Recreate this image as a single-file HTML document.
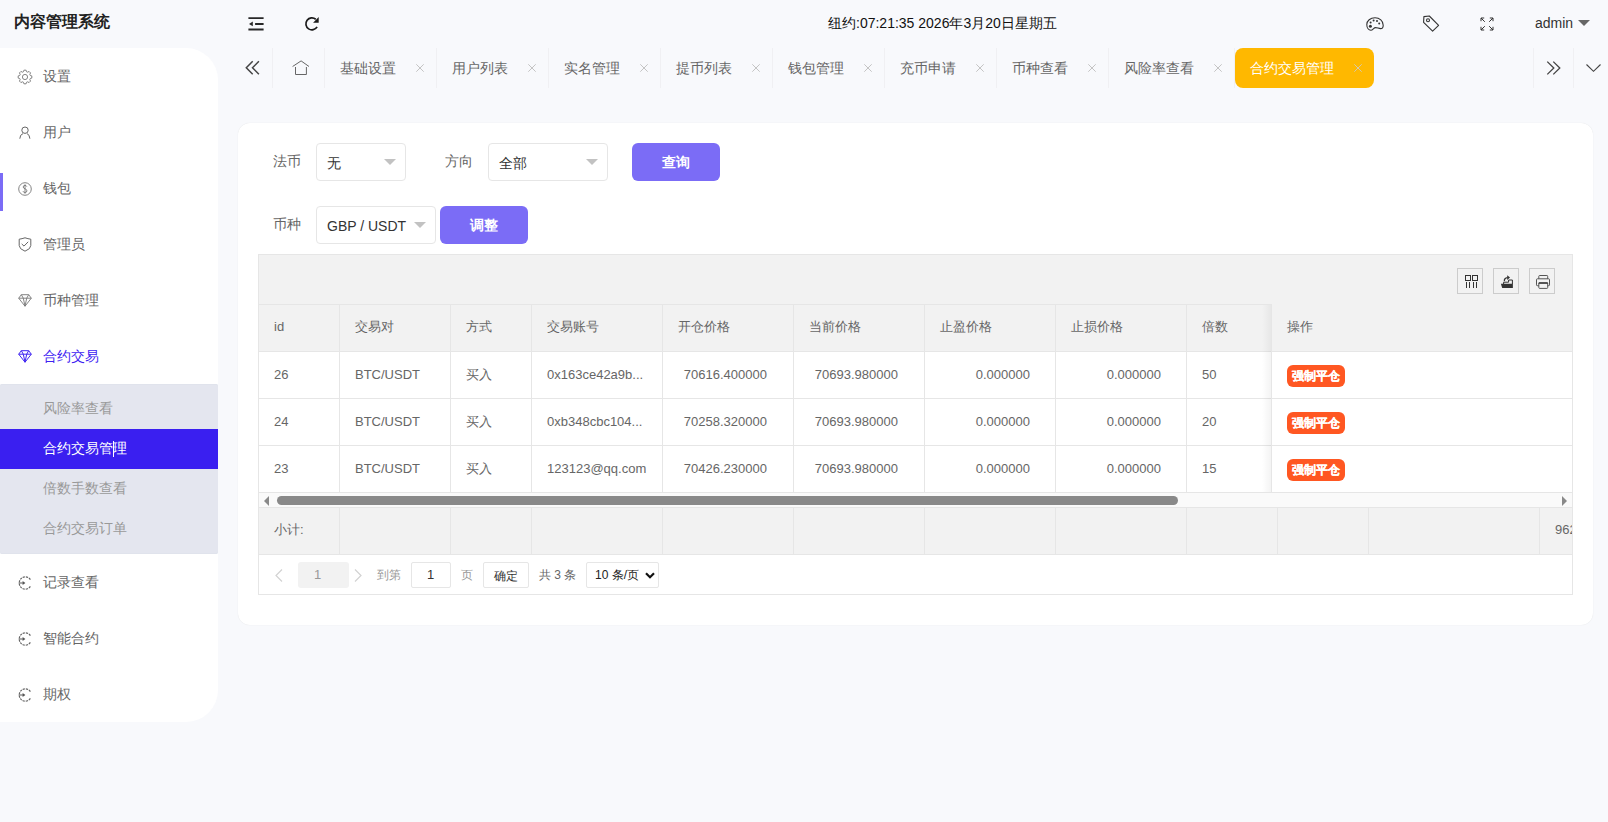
<!DOCTYPE html>
<html><head><meta charset="utf-8">
<style>
*{margin:0;padding:0;box-sizing:border-box}
html,body{width:1608px;height:822px;overflow:hidden;background:#f8f9fc;font-family:"Liberation Sans",sans-serif;font-size:14px;color:#333}
.a{position:absolute}
.t{position:absolute;white-space:nowrap;line-height:1}
svg{position:absolute;overflow:visible}
/* sidebar */
#side{position:absolute;left:0;top:48px;width:218px;height:674px;background:#fff;border-radius:0 32px 32px 0}
.mi{position:absolute;left:43px;font-size:14px;color:#666;line-height:20px}
.sub{position:absolute;left:0;top:384px;width:218px;height:170px;background:#e4e6ef;border-radius:2px;box-shadow:inset 0 1px 0 #e0e3ec,inset 0 -1px 0 #e0e3ec}
.si{position:absolute;left:43px;font-size:14px;color:#999;line-height:20px}
/* tabs */
.tab{position:absolute;top:48px;height:40px;line-height:40px;color:#666;font-size:14px}
.sep{position:absolute;top:48px;width:1px;height:40px;background:#f0f0f3}
.x{position:absolute;width:8px;height:8px}
/* card */
#card{position:absolute;left:238px;top:123px;width:1355px;height:502px;background:#fff;border-radius:12px;box-shadow:0 0 1px rgba(0,0,0,.12)}
.lbl{position:absolute;color:#666;font-size:14px;line-height:20px}
.sel{position:absolute;border:1px solid #e6e6e6;border-radius:4px;background:#fff;height:38px}
.sel span{position:absolute;left:10px;top:9px;line-height:20px;color:#333;font-size:14px}
.tri{position:absolute;width:0;height:0;border-left:6px solid transparent;border-right:6px solid transparent;border-top:6px solid #c2c2c2}
.btn{position:absolute;background:#7b6cf6;color:#fff;border-radius:6px;height:38px;line-height:38px;text-align:center;font-weight:bold;font-size:14px}
/* table */
.tb{position:absolute;font-size:13px;color:#666}
.vl{position:absolute;width:1px;background:#e6e6e6}
.hl{position:absolute;height:1px;background:#e6e6e6}
.c{position:absolute;line-height:20px;white-space:nowrap}
.r{position:absolute;line-height:20px;white-space:nowrap;text-align:right}
.badge{position:absolute;width:58px;height:22px;line-height:22px;background:#ff5722;color:#fff;font-size:12px;font-weight:bold;text-align:center;border-radius:6px;-webkit-text-stroke:0.2px #fff}
.tool{position:absolute;top:268px;width:26px;height:26px;border:1px solid #ccc}
</style></head><body>

<!-- header -->
<div class="t" style="left:14px;top:14px;font-size:16px;font-weight:bold;color:#222">内容管理系统</div>
<svg style="left:248px;top:17px" width="16" height="14" viewBox="0 0 16 14"><path d="M0.4 1.1H15.6M7.1 6.95H15.6M0.4 12.5H15.6" stroke="#282828" stroke-width="1.9" fill="none"/><path d="M1 6.95L4.8 4.6V9.3Z" fill="#282828"/></svg>
<svg style="left:300px;top:12px" width="24" height="24" viewBox="0 0 24 24"><path d="M17.1 14.85A6 6 0 1 1 15.76 7.25" stroke="#1a1a1a" stroke-width="1.7" fill="none"/><path d="M18.7 5.1V10.8H13.1Z" fill="#1a1a1a"/></svg>
<div class="t" style="left:828px;top:16px;font-size:14px;color:#111">纽约:07:21:35 2026年3月20日星期五</div>
<!-- palette -->
<svg style="left:1366px;top:17px" width="18" height="14" viewBox="0 0 18 14">
  <path d="M9 0.8C4.3 0.8 0.8 3.8 0.8 7.6C0.8 11.2 2.8 13.2 4.8 13.2C7 13.2 7.6 10.6 9.6 10.6C11.4 10.6 12.6 11.6 14.6 11.6C16.6 11.6 17.2 10.2 17.2 8.2C17.2 4 13.6 0.8 9 0.8Z" stroke="#333" stroke-width="1.1" fill="none"/>
  <circle cx="4.4" cy="9.3" r="1.5" fill="#333"/><circle cx="4.6" cy="5.4" r="1" fill="#333"/><circle cx="7.6" cy="3.5" r="1" fill="#333"/><circle cx="11" cy="4" r="1" fill="#333"/><circle cx="13.2" cy="6.6" r="1" fill="#333"/>
</svg>
<!-- tag -->
<svg style="left:1423px;top:15px" width="17" height="17" viewBox="0 0 17 17">
  <path d="M0.9 1.6L6.3 1L15.6 10.3L9.6 16.2L0.6 7.3Z" stroke="#333" stroke-width="1.1" fill="none" stroke-linejoin="round"/>
  <circle cx="5" cy="5.3" r="1.5" stroke="#333" stroke-width="1.1" fill="none"/>
</svg>
<!-- fullscreen -->
<svg style="left:1480px;top:17px" width="14" height="14" viewBox="0 0 14 14">
  <path d="M1 4.2V1H4.2M1 1L4.8 4.8M9.8 1H13V4.2M13 1L9.2 4.8M1 9.8V13H4.2M1 13L4.8 9.2M9.8 13H13V9.8M13 13L9.2 9.2" stroke="#333" stroke-width="1" fill="none"/>
</svg>
<div class="t" style="left:1535px;top:16px;font-size:14px;color:#333">admin</div>
<div class="tri" style="left:1578px;top:20px;border-top-color:#666"></div>

<!-- sidebar -->
<div id="side"></div>
<div class="sub"></div>
<div class="a" style="left:0;top:429px;width:218px;height:40px;background:#3a1ff0"></div>
<div class="a" style="left:0;top:173px;width:3px;height:38px;background:#7b6cf6"></div>


<!-- sidebar icons -->
<svg style="left:18px;top:69.5px" width="14" height="14" viewBox="0 0 14 14"><path d="M5.48 1.71 L5.92 0.18 L8.08 0.18 L8.52 1.71 L9.67 2.19 L11.06 1.42 L12.58 2.94 L11.81 4.33 L12.29 5.48 L13.82 5.92 L13.82 8.08 L12.29 8.52 L11.81 9.67 L12.58 11.06 L11.06 12.58 L9.67 11.81 L8.52 12.29 L8.08 13.82 L5.92 13.82 L5.48 12.29 L4.33 11.81 L2.94 12.58 L1.42 11.06 L2.19 9.67 L1.71 8.52 L0.18 8.08 L0.18 5.92 L1.71 5.48 L2.19 4.33 L1.42 2.94 L2.94 1.42 L4.33 2.19Z" stroke="#777" stroke-width="0.9" fill="none" stroke-linejoin="round"/><circle cx="7" cy="7" r="2.6" stroke="#777" stroke-width="0.9" fill="none"/></svg>
<svg style="left:18px;top:126px" width="14" height="14" viewBox="0 0 14 14"><circle cx="7" cy="4.2" r="3.2" stroke="#666" stroke-width="1" fill="none"/><path d="M1.8 12.7Q2 8.5 5 7.6M9 7.6Q11.6 8.5 11.9 12.7" stroke="#666" stroke-width="1" fill="none"/></svg>
<svg style="left:18px;top:182px" width="14" height="14" viewBox="0 0 14 14"><circle cx="7" cy="7" r="6.3" stroke="#777" stroke-width="0.9" fill="none"/><path d="M8.8 4.6Q8.3 3.4 7 3.4Q5.2 3.4 5.2 5Q5.2 6.2 7 6.8Q8.9 7.4 8.9 8.8Q8.9 10.5 7 10.5Q5.4 10.5 5 9.2M7 2.3V11.7" stroke="#777" stroke-width="0.9" fill="none"/></svg>
<svg style="left:18px;top:237px" width="14" height="15" viewBox="0 0 14 15"><path d="M1.2 2.2Q4 1.8 7 0.8Q10 1.8 12.8 2.2V8.5Q12.8 12 7 14.2Q1.2 12 1.2 8.5Z" stroke="#666" stroke-width="1" fill="none" stroke-linejoin="round"/><path d="M3.7 6.9L6 9.1L10.2 4.8" stroke="#666" stroke-width="1" fill="none"/></svg>
<svg style="left:18px;top:294px" width="14" height="13" viewBox="0 0 14 13"><path d="M3.3 0.7H10.7L13.3 4.2L7 12.2L0.7 4.2Z M0.7 4.2H13.3M3.3 0.7L5.3 4.2L7 12.2L8.7 4.2L10.7 0.7" stroke="#777" stroke-width="0.9" fill="none" stroke-linejoin="round"/></svg>
<svg style="left:18px;top:350px" width="14" height="13" viewBox="0 0 14 13"><path d="M3.3 0.7H10.7L13.3 4.2L7 12.2L0.7 4.2Z M0.7 4.2H13.3M3.3 0.7L5.3 4.2L7 12.2L8.7 4.2L10.7 0.7" stroke="#3d22f2" stroke-width="1" fill="none" stroke-linejoin="round"/></svg>
<svg style="left:18px;top:576px" width="14" height="14" viewBox="0 0 14 14"><path d="M12.4 3.6A6.1 6.1 0 1 0 12.4 10.4" stroke="#666" stroke-width="1.2" fill="none" stroke-dasharray="2.2 0.9"/><path d="M0.8 7H5" stroke="#666" stroke-width="1.1"/><path d="M4.6 5L7.4 7L4.6 9Z" fill="#555"/></svg>
<svg style="left:18px;top:632px" width="14" height="14" viewBox="0 0 14 14"><path d="M12.4 3.6A6.1 6.1 0 1 0 12.4 10.4" stroke="#666" stroke-width="1.2" fill="none" stroke-dasharray="2.2 0.9"/><path d="M0.8 7H5" stroke="#666" stroke-width="1.1"/><path d="M4.6 5L7.4 7L4.6 9Z" fill="#555"/></svg>
<svg style="left:18px;top:688px" width="14" height="14" viewBox="0 0 14 14"><path d="M12.4 3.6A6.1 6.1 0 1 0 12.4 10.4" stroke="#666" stroke-width="1.2" fill="none" stroke-dasharray="2.2 0.9"/><path d="M0.8 7H5" stroke="#666" stroke-width="1.1"/><path d="M4.6 5L7.4 7L4.6 9Z" fill="#555"/></svg>
<div class="mi" style="top:66px">设置</div>
<div class="mi" style="top:122px">用户</div>
<div class="mi" style="top:178px">钱包</div>
<div class="mi" style="top:234px">管理员</div>
<div class="mi" style="top:290px">币种管理</div>
<div class="mi" style="top:346px;color:#3d22f2">合约交易</div>
<div class="si" style="top:398px">风险率查看</div>
<div class="si" style="top:438px;color:#fff">合约交易管理</div><div class="a" style="left:113px;top:441px;width:1px;height:16px;background:#fff"></div>
<div class="si" style="top:478px">倍数手数查看</div>
<div class="si" style="top:518px">合约交易订单</div>
<div class="mi" style="top:572px">记录查看</div>
<div class="mi" style="top:628px">智能合约</div>
<div class="mi" style="top:684px">期权</div>

<!-- tabs -->
<svg style="left:240px;top:55px" width="28" height="25" viewBox="0 0 28 25"><path d="M12.7 6.3L6.3 12.8L12.7 19.2M18.9 6.3L12.5 12.8L18.9 19.2" stroke="#444" stroke-width="1.5" fill="none"/></svg>
<div class="sep" style="left:272px"></div>
<svg style="left:288px;top:55px" width="28" height="25" viewBox="0 0 28 25"><path d="M4.6 11.5L13.1 5.9L21 11.5M7.5 12V19.5H18.4V12" stroke="#666" stroke-width="1" fill="none"/></svg>
<div class="sep" style="left:324px"></div>

<div class="tab" style="left:340px">基础设置</div>
<svg class="x" style="left:416px;top:64px" width="8" height="8" viewBox="0 0 8 8"><path d="M0.3 0.3L7.7 7.7M7.7 0.3L0.3 7.7" stroke="#c4c4c4" stroke-width="1" fill="none"/></svg>
<div class="sep" style="left:436px"></div>
<div class="tab" style="left:452px">用户列表</div>
<svg class="x" style="left:528px;top:64px" width="8" height="8" viewBox="0 0 8 8"><path d="M0.3 0.3L7.7 7.7M7.7 0.3L0.3 7.7" stroke="#c4c4c4" stroke-width="1" fill="none"/></svg>
<div class="sep" style="left:548px"></div>
<div class="tab" style="left:564px">实名管理</div>
<svg class="x" style="left:640px;top:64px" width="8" height="8" viewBox="0 0 8 8"><path d="M0.3 0.3L7.7 7.7M7.7 0.3L0.3 7.7" stroke="#c4c4c4" stroke-width="1" fill="none"/></svg>
<div class="sep" style="left:660px"></div>
<div class="tab" style="left:676px">提币列表</div>
<svg class="x" style="left:752px;top:64px" width="8" height="8" viewBox="0 0 8 8"><path d="M0.3 0.3L7.7 7.7M7.7 0.3L0.3 7.7" stroke="#c4c4c4" stroke-width="1" fill="none"/></svg>
<div class="sep" style="left:772px"></div>
<div class="tab" style="left:788px">钱包管理</div>
<svg class="x" style="left:864px;top:64px" width="8" height="8" viewBox="0 0 8 8"><path d="M0.3 0.3L7.7 7.7M7.7 0.3L0.3 7.7" stroke="#c4c4c4" stroke-width="1" fill="none"/></svg>
<div class="sep" style="left:884px"></div>
<div class="tab" style="left:900px">充币申请</div>
<svg class="x" style="left:976px;top:64px" width="8" height="8" viewBox="0 0 8 8"><path d="M0.3 0.3L7.7 7.7M7.7 0.3L0.3 7.7" stroke="#c4c4c4" stroke-width="1" fill="none"/></svg>
<div class="sep" style="left:996px"></div>
<div class="tab" style="left:1012px">币种查看</div>
<svg class="x" style="left:1088px;top:64px" width="8" height="8" viewBox="0 0 8 8"><path d="M0.3 0.3L7.7 7.7M7.7 0.3L0.3 7.7" stroke="#c4c4c4" stroke-width="1" fill="none"/></svg>
<div class="sep" style="left:1108px"></div>
<div class="tab" style="left:1124px">风险率查看</div>
<svg class="x" style="left:1214px;top:64px" width="8" height="8" viewBox="0 0 8 8"><path d="M0.3 0.3L7.7 7.7M7.7 0.3L0.3 7.7" stroke="#c4c4c4" stroke-width="1" fill="none"/></svg>
<div class="sep" style="left:1234px"></div>
<div class="a" style="left:1235px;top:48px;width:139px;height:40px;background:#ffb800;border-radius:8px"></div>
<div class="tab" style="left:1250px;color:#fff">合约交易管理</div>
<svg class="x" style="left:1354px;top:64px" width="8" height="8" viewBox="0 0 8 8"><path d="M0.3 0.3L7.7 7.7M7.7 0.3L0.3 7.7" stroke="#d4c8b0" stroke-width="1" fill="none"/></svg>
<div class="sep" style="left:1533px"></div><div class="sep" style="left:1573px"></div>
<svg style="left:1540px;top:55px" width="28" height="25" viewBox="0 0 28 25"><path d="M7.3 6.6L13.8 13L7.3 19.4M13.3 6.6L19.8 13L13.3 19.4" stroke="#444" stroke-width="1.3" fill="none"/></svg>
<svg style="left:1586px;top:64px" width="15" height="9" viewBox="0 0 15 9"><path d="M0.5 0.5L7.5 7.3L14.5 0.5" stroke="#444" stroke-width="1.15" fill="none"/></svg>

<!-- card -->
<div id="card"></div>
<div class="lbl" style="left:273px;top:151px">法币</div>
<div class="sel" style="left:316px;top:143px;width:90px"><span>无</span></div>
<div class="tri" style="left:384px;top:159px"></div>
<div class="lbl" style="left:445px;top:151px">方向</div>
<div class="sel" style="left:488px;top:143px;width:120px"><span>全部</span></div>
<div class="tri" style="left:586px;top:159px"></div>
<div class="btn" style="left:632px;top:143px;width:88px">查询</div>
<div class="lbl" style="left:273px;top:214px">币种</div>
<div class="sel" style="left:316px;top:206px;width:120px"><span>GBP / USDT</span></div>
<div class="tri" style="left:414px;top:222px"></div>
<div class="btn" style="left:440px;top:206px;width:88px">调整</div>

<div class="a" style="left:258px;top:254px;width:1315px;height:50px;background:#f2f2f2"></div>
<div class="a" style="left:258px;top:304px;width:1315px;height:47px;background:#f2f2f2"></div>
<div class="a" style="left:258px;top:507px;width:1315px;height:47px;background:#f2f2f2"></div>
<div class="a" style="left:259px;top:493px;width:1313px;height:14px;background:#fafafa"></div>
<div class="vl" style="left:258px;top:254px;height:341px"></div>
<div class="vl" style="left:1572px;top:254px;height:341px"></div>
<div class="hl" style="left:258px;top:254px;width:1315px"></div>
<div class="hl" style="left:258px;top:304px;width:1315px"></div>
<div class="hl" style="left:258px;top:351px;width:1315px"></div>
<div class="hl" style="left:258px;top:398px;width:1315px"></div>
<div class="hl" style="left:258px;top:445px;width:1315px"></div>
<div class="hl" style="left:258px;top:492px;width:1315px"></div>
<div class="hl" style="left:258px;top:507px;width:1315px"></div>
<div class="hl" style="left:258px;top:554px;width:1315px"></div>
<div class="hl" style="left:258px;top:594px;width:1315px"></div>
<div class="vl" style="left:339px;top:304px;height:188px"></div>
<div class="vl" style="left:339px;top:507px;height:47px"></div>
<div class="vl" style="left:450px;top:304px;height:188px"></div>
<div class="vl" style="left:450px;top:507px;height:47px"></div>
<div class="vl" style="left:531px;top:304px;height:188px"></div>
<div class="vl" style="left:531px;top:507px;height:47px"></div>
<div class="vl" style="left:662px;top:304px;height:188px"></div>
<div class="vl" style="left:662px;top:507px;height:47px"></div>
<div class="vl" style="left:793px;top:304px;height:188px"></div>
<div class="vl" style="left:793px;top:507px;height:47px"></div>
<div class="vl" style="left:924px;top:304px;height:188px"></div>
<div class="vl" style="left:924px;top:507px;height:47px"></div>
<div class="vl" style="left:1055px;top:304px;height:188px"></div>
<div class="vl" style="left:1055px;top:507px;height:47px"></div>
<div class="vl" style="left:1186px;top:304px;height:188px"></div>
<div class="vl" style="left:1186px;top:507px;height:47px"></div>
<div class="vl" style="left:1277px;top:507px;height:47px"></div>
<div class="vl" style="left:1368px;top:507px;height:47px"></div>
<div class="vl" style="left:1539px;top:507px;height:47px"></div>
<div class="c tb" style="left:274px;top:317px">id</div>
<div class="c tb" style="left:355px;top:317px">交易对</div>
<div class="c tb" style="left:466px;top:317px">方式</div>
<div class="c tb" style="left:547px;top:317px">交易账号</div>
<div class="c tb" style="left:678px;top:317px">开仓价格</div>
<div class="c tb" style="left:809px;top:317px">当前价格</div>
<div class="c tb" style="left:940px;top:317px">止盈价格</div>
<div class="c tb" style="left:1071px;top:317px">止损价格</div>
<div class="c tb" style="left:1202px;top:317px">倍数</div>
<div class="c tb" style="left:274px;top:365px">26</div>
<div class="c tb" style="left:355px;top:365px">BTC/USDT</div>
<div class="c tb" style="left:466px;top:365px">买入</div>
<div class="c tb" style="left:547px;top:365px">0x163ce42a9b...</div>
<div class="r tb" style="left:647px;width:120px;top:365px">70616.400000</div>
<div class="r tb" style="left:778px;width:120px;top:365px">70693.980000</div>
<div class="r tb" style="left:910px;width:120px;top:365px">0.000000</div>
<div class="r tb" style="left:1041px;width:120px;top:365px">0.000000</div>
<div class="c tb" style="left:1202px;top:365px">50</div>
<div class="c tb" style="left:274px;top:412px">24</div>
<div class="c tb" style="left:355px;top:412px">BTC/USDT</div>
<div class="c tb" style="left:466px;top:412px">买入</div>
<div class="c tb" style="left:547px;top:412px">0xb348cbc104...</div>
<div class="r tb" style="left:647px;width:120px;top:412px">70258.320000</div>
<div class="r tb" style="left:778px;width:120px;top:412px">70693.980000</div>
<div class="r tb" style="left:910px;width:120px;top:412px">0.000000</div>
<div class="r tb" style="left:1041px;width:120px;top:412px">0.000000</div>
<div class="c tb" style="left:1202px;top:412px">20</div>
<div class="c tb" style="left:274px;top:459px">23</div>
<div class="c tb" style="left:355px;top:459px">BTC/USDT</div>
<div class="c tb" style="left:466px;top:459px">买入</div>
<div class="c tb" style="left:547px;top:459px">123123@qq.com</div>
<div class="r tb" style="left:647px;width:120px;top:459px">70426.230000</div>
<div class="r tb" style="left:778px;width:120px;top:459px">70693.980000</div>
<div class="r tb" style="left:910px;width:120px;top:459px">0.000000</div>
<div class="r tb" style="left:1041px;width:120px;top:459px">0.000000</div>
<div class="c tb" style="left:1202px;top:459px">15</div>
<div class="a" style="left:1262px;top:305px;width:10px;height:187px;background:linear-gradient(to right,rgba(0,0,0,0),rgba(0,0,0,0.05))"></div>
<div class="a" style="left:1272px;top:304px;width:300px;height:47px;background:#f2f2f2"></div>
<div class="a" style="left:1272px;top:352px;width:300px;height:140px;background:#fff"></div>
<div class="hl" style="left:1272px;top:398px;width:300px"></div><div class="hl" style="left:1272px;top:445px;width:300px"></div>
<div class="vl" style="left:1271px;top:304px;height:188px"></div>
<div class="c tb" style="left:1287px;top:317px">操作</div>
<div class="badge" style="left:1287px;top:365px">强制平仓</div>
<div class="badge" style="left:1287px;top:412px">强制平仓</div>
<div class="badge" style="left:1287px;top:459px">强制平仓</div>
<div class="a" style="left:277px;top:496px;width:901px;height:9px;background:#898989;border-radius:5px"></div>
<div class="a" style="left:264px;top:495.5px;width:0;height:0;border-top:5px solid transparent;border-bottom:5px solid transparent;border-right:5.5px solid #898989"></div>
<div class="a" style="left:1562px;top:495.5px;width:0;height:0;border-top:5px solid transparent;border-bottom:5px solid transparent;border-left:5.5px solid #898989"></div>
<div class="c tb" style="left:274px;top:520px">小计:</div>
<div class="a" style="left:1540px;top:507px;width:32px;height:47px;overflow:hidden"><div class="c tb" style="left:15px;top:13px">962.94</div></div>
<div class="tool" style="left:1457px"></div>
<div class="tool" style="left:1493px"></div>
<div class="tool" style="left:1529px"></div>
<svg style="left:1465px;top:275px" width="13" height="13" viewBox="0 0 13 13"><rect x="0.5" y="0.5" width="5" height="5" stroke="#333" stroke-width="1" fill="none"/><rect x="7.5" y="0.5" width="5" height="5" stroke="#333" stroke-width="1" fill="none"/><path d="M1.5 7V13M4.5 7V13M8.5 7V13M11.5 7V13" stroke="#333" stroke-width="1"/></svg>
<svg style="left:1500px;top:275px" width="13" height="13" viewBox="0 0 13 13"><path d="M3.6 9V7.2H8.6V5H12.4V9" stroke="#333" stroke-width="1" fill="none"/><path d="M0.9 8.8H12.9V12.9H2.2Z" fill="#333"/><path d="M4.4 6.2Q4 3 7.6 2.6" stroke="#333" stroke-width="1.3" fill="none"/><path d="M7.2 0.3L10 2.6L7.2 4.9Z" fill="#333"/></svg>
<svg style="left:1536px;top:275px" width="14" height="14" viewBox="0 0 14 14"><g stroke="#555" stroke-width="1" fill="none"><path d="M2.8 3.8V1.3Q2.8 0.5 3.6 0.5H10.9Q11.7 0.5 11.7 1.3V3.8"/><path d="M2.8 10.7H1.3Q0.5 10.7 0.5 9.9V4.6Q0.5 3.8 1.3 3.8H12.7Q13.5 3.8 13.5 4.6V9.9Q13.5 10.7 12.7 10.7H11.7"/><path d="M2.8 8H11.7V12.6Q11.7 13.4 10.9 13.4H3.6Q2.8 13.4 2.8 12.6Z"/></g><path d="M2.8 8H11.7" stroke="#333" stroke-width="1.4"/></svg>
<svg style="left:275px;top:569px" width="8" height="13" viewBox="0 0 8 13"><path d="M7 0.5L1 6.5L7 12.5" stroke="#d2d2d2" stroke-width="1.2" fill="none"/></svg>
<div class="a" style="left:298px;top:562px;width:51px;height:26px;background:#f2f2f2;border-radius:3px"></div>
<div class="c" style="left:314px;top:565px;font-size:13px;color:#999">1</div>
<svg style="left:354px;top:569px" width="8" height="13" viewBox="0 0 8 13"><path d="M1 0.5L7 6.5L1 12.5" stroke="#d2d2d2" stroke-width="1.2" fill="none"/></svg>
<div class="c" style="left:377px;top:565px;font-size:12px;color:#999">到第</div>
<div class="a" style="left:411px;top:562px;width:40px;height:26px;border:1px solid #e6e6e6;border-radius:2px"></div>
<div class="c" style="left:427px;top:565px;font-size:13px;color:#333">1</div>
<div class="c" style="left:461px;top:565px;font-size:12px;color:#999">页</div>
<div class="a" style="left:483px;top:562px;width:46px;height:26px;border:1px solid #e6e6e6;border-radius:2px"></div>
<div class="c" style="left:494px;top:566px;font-size:12px;color:#333">确定</div>
<div class="c" style="left:539px;top:565px;font-size:12px;color:#666">共 3 条</div>
<div class="a" style="left:586px;top:562px;width:73px;height:26px;border:1px solid #e6e6e6;border-radius:2px"></div>
<div class="c" style="left:595px;top:565px;font-size:12px;color:#222">10 条/页</div>
<svg style="left:645px;top:572px" width="10" height="7" viewBox="0 0 10 7"><path d="M1 1.2L5 5.2L9 1.2" stroke="#111" stroke-width="2.2" fill="none"/></svg>

</body></html>
